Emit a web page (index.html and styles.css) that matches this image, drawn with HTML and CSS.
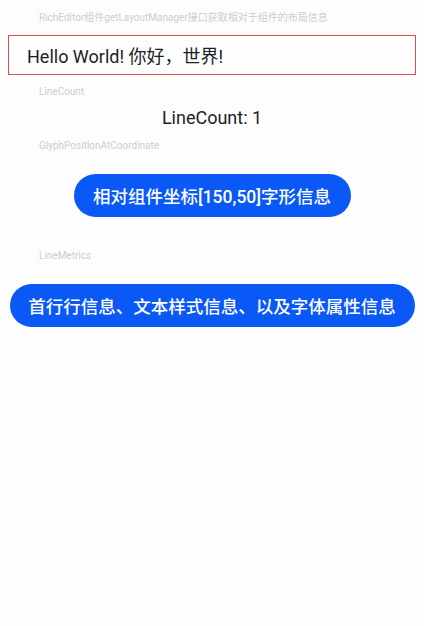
FILE: index.html
```html
<!DOCTYPE html>
<html lang="zh">
<head>
<meta charset="utf-8">
<link rel="stylesheet" href="styles.css">
</head>
<body>
<main class="page">
  <div class="caption cap-first">RichEditor组件getLayoutManager接口获取相对于组件的布局信息</div>
  <div class="editor">Hello World! 你好，世界!</div>
  <div class="caption cap-linecount">LineCount</div>
  <div class="linecount">LineCount: 1</div>
  <div class="caption cap-glyph">GlyphPositionAtCoordinate</div>
  <div class="btn-row"><button class="btn btn-glyph">相对组件坐标[150,50]字形信息</button></div>
  <div class="caption cap-metrics">LineMetrics</div>
  <div class="btn-row"><button class="btn btn-wide">首行行信息、文本样式信息、以及字体属性信息</button></div>
</main>
</body>
</html>
```
FILE: styles.css
```css
html, body {
  margin: 0;
  padding: 0;
  background: #fdfdfd;
}
body {
  width: 424px;
  height: 626px;
  font-family: Roboto, "Noto Sans CJK SC", sans-serif;
  color: #1a1f26;
}
.page {
  display: flex;
  flex-direction: column;
}
.caption {
  font-size: 10px;
  line-height: 14px;
  height: 14px;
  color: #cdcdcd;
  padding-left: 39px;
}
.cap-first { margin-top: 11px; }
.editor {
  margin: 10px 8px 0;
  height: 40px;
  box-sizing: border-box;
  border: 1px solid #e34a4a;
  display: flex;
  align-items: center;
  padding-left: 18px;
  font-size: 18px;
}
.cap-linecount { margin-top: 10px; }
.linecount {
  margin-top: 7px;
  text-align: center;
  font-size: 18px;
  line-height: 24px;
}
.cap-glyph { margin-top: 9px; }
.btn-row {
  display: flex;
  justify-content: center;
  margin-top: 21px;
}
.btn {
  height: 43px;
  border: none;
  border-radius: 22px;
  background: #0a59f7;
  color: #fff;
  font-family: Roboto, "Noto Sans CJK SC", sans-serif;
  font-size: 17.5px;
  font-weight: 500;
  padding: 0 16px;
  white-space: nowrap;
}
.btn-glyph { width: 277px; }
.cap-metrics { margin-top: 32px; }
.btn-wide { width: 405px; padding: 0 12px; }
```
